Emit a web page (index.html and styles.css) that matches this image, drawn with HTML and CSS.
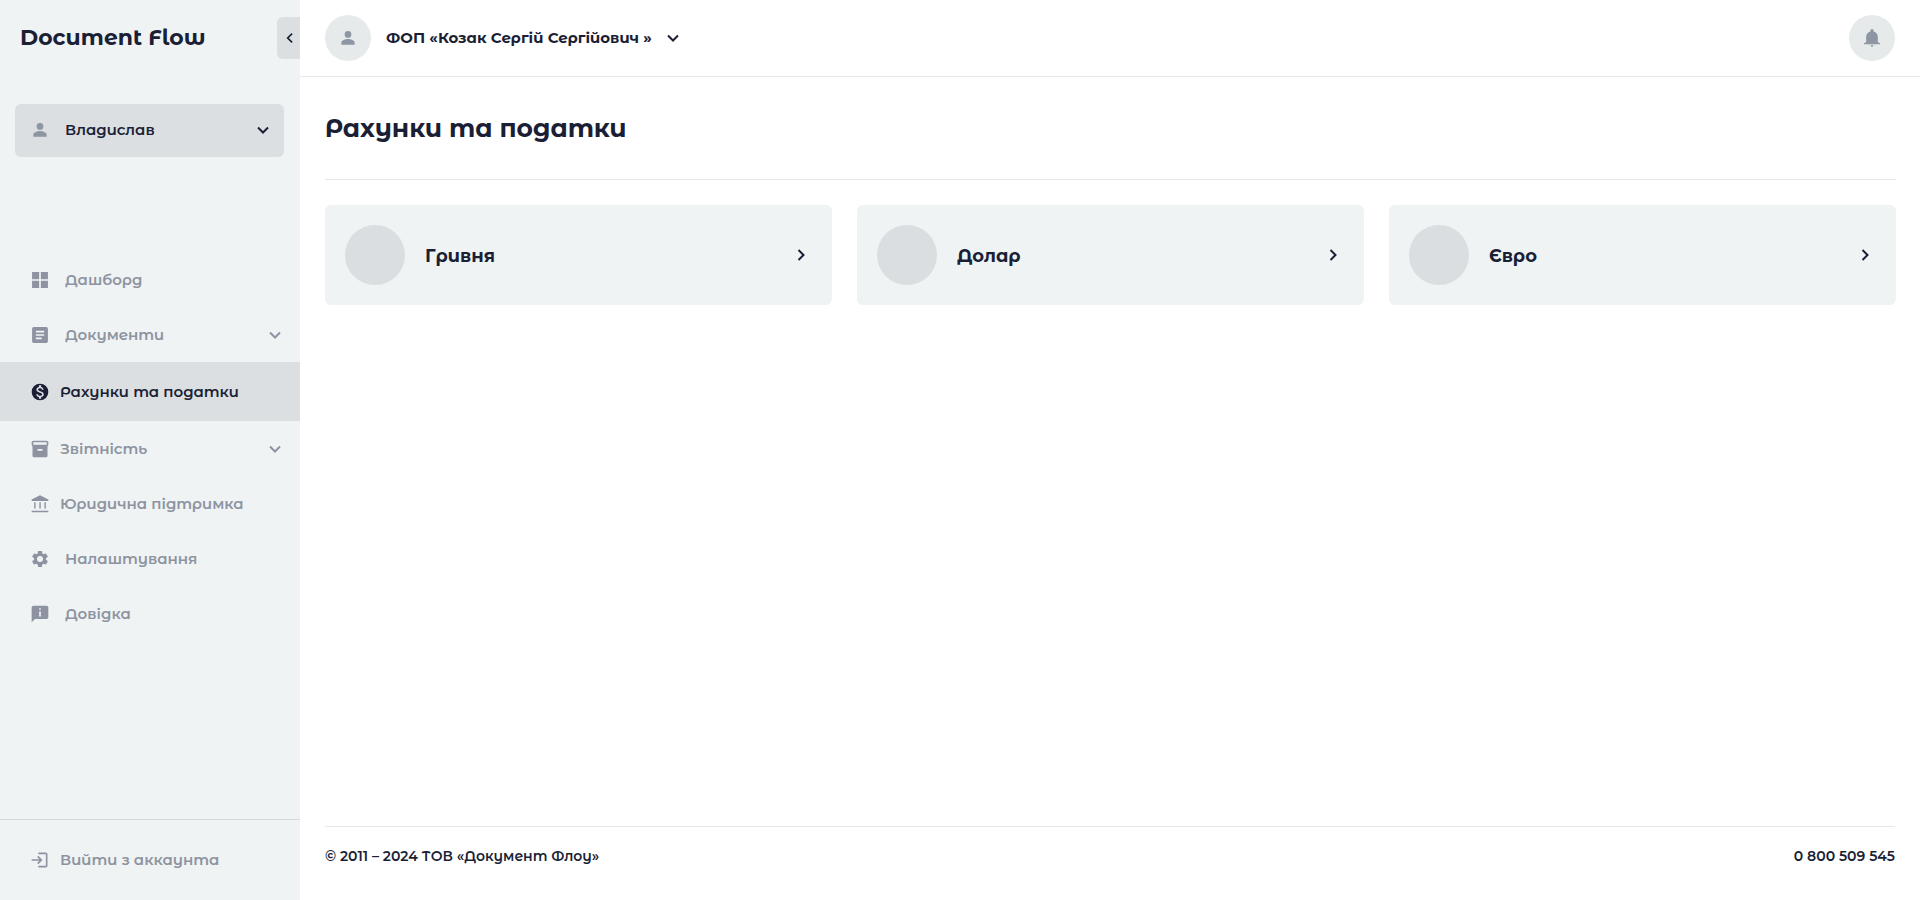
FILE: index.html
```html
<!DOCTYPE html>
<html lang="uk">
<head>
<meta charset="utf-8">
<meta name="viewport" content="width=device-width, initial-scale=1">
<title>Document Flow</title>
<link rel="stylesheet" href="styles.css">
</head>
<body>
<div class="app">
  <aside class="sidebar">
    <div class="brand">
      <a class="brand-name" href="#">Document Flow</a>
      <button class="collapse" type="button" aria-label="Згорнути меню">
        <svg width="20" height="20" viewBox="0 0 24 24"><path d="M16.400 7.400 15 6l-6 6 6 6 1.400-1.400-4.600-4.600z"/></svg>
      </button>
    </div>
    <button class="user" type="button">
      <svg class="icon" viewBox="0 0 24 24"><circle cx="12" cy="7.700" r="4"/><path d="M4 20v-2.400c0-2.800 5-4.400 8-4.400s8 1.600 8 4.400V20z"/></svg>
      <span class="user-name">Владислав</span>
      <svg class="chevron" viewBox="0 0 20 20"><path d="m5 7.500 5 5 5-5"/></svg>
    </button>
    <nav class="nav">
      <a class="nav-item spaced" href="#">
        <svg class="icon" viewBox="0 0 24 24"><path d="M2.500 2.500H11V11H2.500zM13 2.500h8.500V11H13zM2.500 13H11v8.500H2.500zM13 13h8.500v8.500H13z"/></svg>
        <span>Дашборд</span>
      </a>
      <a class="nav-item spaced" href="#">
        <svg class="icon" viewBox="0 0 24 24"><path d="M19.500 2.500h-15a2 2 0 0 0-2 2v15a2 2 0 0 0 2 2h15a2 2 0 0 0 2-2v-15a2 2 0 0 0-2-2zM14 17H7v-2h7zm3-4H7v-2h10zm0-4H7V7h10z"/></svg>
        <span>Документи</span>
        <svg class="chevron" viewBox="0 0 20 20"><path d="m5 7.500 5 5 5-5"/></svg>
      </a>
      <a class="nav-item active" href="#" aria-current="page">
        <svg class="icon" viewBox="0 0 24 24"><path d="M12 2a10 10 0 1 0 0 20 10 10 0 0 0 0-20zm1.410 16.090V20h-2.670v-1.930c-1.710-.36-3.160-1.460-3.270-3.400h1.960c.1 1.050.82 1.870 2.650 1.870 1.960 0 2.400-.98 2.400-1.590 0-.83-.44-1.610-2.670-2.140-2.480-.6-4.180-1.620-4.180-3.670 0-1.720 1.390-2.840 3.110-3.210V4h2.670v1.950c1.860.45 2.790 1.860 2.850 3.390H14.300c-.05-1.110-.64-1.870-2.220-1.870-1.500 0-2.400.68-2.400 1.640 0 .84.65 1.390 2.670 1.910s4.180 1.390 4.180 3.910c-.01 1.830-1.380 2.830-3.120 3.160z"/></svg>
        <span>Рахунки та податки</span>
      </a>
      <a class="nav-item" href="#">
        <svg class="icon" viewBox="0 0 24 24"><path fill-rule="evenodd" d="M20 2H4c-1 0-2 .9-2 2v3.010c0 .72.430 1.340 1 1.690V20c0 1.100 1.100 2 2 2h14c.9 0 2-.9 2-2V8.700c.57-.35 1-.97 1-1.690V4c0-1.100-1-2-2-2zm-5 12H9v-2h6zm5-7H4V4h16z"/></svg>
        <span>Звітність</span>
        <svg class="chevron" viewBox="0 0 20 20"><path d="m5 7.500 5 5 5-5"/></svg>
      </a>
      <a class="nav-item" href="#">
        <svg class="icon" viewBox="0 0 24 24"><path d="M5 10h1.700v7.500H5zM11.200 10h1.700v7.500h-1.700zM17.300 10H19v7.500h-1.700zM2 20h20v2H2zM12 1.500 2 6.500V8.300h20V6.500z"/></svg>
        <span>Юридична підтримка</span>
      </a>
      <a class="nav-item spaced" href="#">
        <svg class="icon" viewBox="0 0 24 24"><path d="M19.140 12.940c.04-.3.060-.61.060-.94 0-.32-.02-.64-.07-.94l2.030-1.580a.49.49 0 0 0 .12-.61l-1.920-3.320a.488.488 0 0 0-.59-.22l-2.390.96c-.5-.38-1.030-.7-1.620-.94l-.36-2.540a.484.484 0 0 0-.48-.41h-3.840c-.24 0-.43.17-.47.41l-.36 2.540c-.59.24-1.130.57-1.620.94l-2.390-.96c-.22-.08-.47 0-.59.22L2.740 8.870c-.12.21-.08.47.12.61l2.030 1.580c-.05.3-.09.63-.09.94s.02.64.07.94l-2.030 1.580a.49.49 0 0 0-.12.61l1.920 3.320c.12.22.37.29.59.22l2.390-.96c.5.38 1.030.7 1.620.94l.36 2.540c.05.24.24.41.48.41h3.840c.24 0 .44-.17.47-.41l.36-2.540c.59-.24 1.130-.56 1.620-.94l2.390.96c.22.08.47 0 .59-.22l1.920-3.320c.12-.22.07-.47-.12-.61zM12 15.600a3.600 3.600 0 1 1 0-7.200 3.600 3.600 0 0 1 0 7.200z"/></svg>
        <span>Налаштування</span>
      </a>
      <a class="nav-item spaced" href="#">
        <svg class="icon" viewBox="0 0 24 24"><path d="M20 2H4a2 2 0 0 0-2 2v18l4-4h14a2 2 0 0 0 2-2V4a2 2 0 0 0-2-2zm-7 13h-2V9h2zm0-8h-2V5h2z"/></svg>
        <span>Довідка</span>
      </a>
    </nav>
    <div class="logout">
      <a class="nav-item" href="#">
        <svg class="icon" viewBox="0 0 24 24"><path d="M10 3h9a2 2 0 0 1 2 2v14a2 2 0 0 1-2 2h-9v-2h9V5h-9zM10 7l5 5-5 5-1.400-1.400 2.600-2.600H2v-2h9.200L8.600 8.400z"/></svg>
        <span>Вийти з аккаунта</span>
      </a>
    </div>
  </aside>
  <div class="page">
    <header class="topbar">
      <button class="company" type="button">
        <span class="round"><svg class="icon" viewBox="0 0 24 24"><circle cx="12" cy="7.700" r="4"/><path d="M4 20v-2.400c0-2.800 5-4.400 8-4.400s8 1.600 8 4.400V20z"/></svg></span>
        <span>ФОП «Козак Сергій Сергійович »</span>
        <svg class="chevron" viewBox="0 0 20 20"><path d="m5 7.500 5 5 5-5"/></svg>
      </button>
      <button class="round" type="button" aria-label="Сповіщення">
        <svg class="bell" viewBox="0 0 24 24"><path d="M12 22.500c1.100 0 2-.7 2-1.700h-4c0 1 .9 1.700 2 1.700zM19 17v-6.500c0-3.200-2-5.700-5-6.400V3.200a2 2 0 0 0-4 0v.9c-3 .7-5 3.200-5 6.400V17l-2.500 1v1.500h19V18z"/></svg>
      </button>
    </header>
    <main class="content">
      <h1 class="title">Рахунки та податки</h1>
      <div class="cards">
        <a class="card" href="#"><span class="coin"></span><span class="card-name">Гривня</span><svg class="arrow" viewBox="0 0 20 20"><path d="m7.500 5 5 5-5 5"/></svg></a>
        <a class="card" href="#"><span class="coin"></span><span class="card-name">Долар</span><svg class="arrow" viewBox="0 0 20 20"><path d="m7.500 5 5 5-5 5"/></svg></a>
        <a class="card" href="#"><span class="coin"></span><span class="card-name">Євро</span><svg class="arrow" viewBox="0 0 20 20"><path d="m7.500 5 5 5-5 5"/></svg></a>
      </div>
    </main>
    <footer class="footer">
      <span>© 2011 – 2024 ТОВ «Документ Флоу»</span>
      <a href="tel:0800509545">0 800 509 545</a>
    </footer>
  </div>
</div>
</body>
</html>
```
FILE: styles.css
```css
* { box-sizing: border-box; }
body {
  margin: 0;
  background: #fff;
  color: #1b1f36;
  font-family: "Montserrat Alternates", Montserrat, Inter, "Open Sans", sans-serif;
  font-size: 15px;
  font-weight: 600;
  line-height: 20px;
}
a { color: inherit; text-decoration: none; }
button {
  padding: 0;
  border: 0;
  background: none;
  color: inherit;
  font: inherit;
  cursor: pointer;
}
svg { display: block; flex: none; fill: currentColor; }
.icon { width: 20px; height: 20px; }
.chevron, .arrow {
  width: 20px;
  height: 20px;
  fill: none;
  stroke: currentColor;
  stroke-width: 2;
}
.app { display: flex; min-height: 100vh; }

.sidebar {
  display: flex;
  flex-direction: column;
  flex: none;
  width: 300px;
  background: #eff3f4;
}
.brand {
  display: flex;
  align-items: center;
  justify-content: space-between;
  height: 76px;
  padding-left: 20px;
}
.brand-name { font-size: 22px; font-weight: 700; line-height: 32px; }
.collapse {
  display: flex;
  align-items: center;
  justify-content: center;
  width: 23px;
  height: 42px;
  border-radius: 6px 0 0 6px;
  background: #dbdfe2;
}
.user {
  display: flex;
  align-items: center;
  gap: 15px;
  height: 53px;
  margin: 28px 16px 0 15px;
  padding: 0 11px 1px 15px;
  border-radius: 6px;
  background: #dbdfe2;
}
.user .icon, .round svg { color: #8e96a4; }
.user-name { flex: 1; text-align: left; }
.nav { margin-top: 95px; }
.nav-item {
  display: flex;
  align-items: center;
  gap: 10px;
  height: 55px;
  padding: 0 15px 0 30px;
  color: #8e93a1;
}
.nav-item.spaced { gap: 15px; }
.nav-item.active { height: 59px; background: #dbdfe2; color: #1b1f36; }
.nav-item .chevron { margin-left: auto; }
.logout {
  margin-top: auto;
  padding: 12px 0 13px;
  border-top: 1px solid #d5d9dc;
}

.page { display: flex; flex-direction: column; flex: 1; min-width: 0; }
.topbar {
  display: flex;
  align-items: center;
  justify-content: space-between;
  height: 77px;
  padding: 0 25px;
  border-bottom: 1px solid #e6e8ea;
}
.company { display: flex; align-items: center; gap: 15px; font-weight: 700; }
.company .chevron { margin-left: -4px; }
.round {
  display: flex;
  align-items: center;
  justify-content: center;
  width: 46px;
  height: 46px;
  border-radius: 50%;
  background: #e6eaeb;
}
.bell { width: 20px; height: 20px; }
.content { flex: 1; padding: 0 24px 0 25px; }
.title {
  margin: 0 0 25px;
  padding: 34px 0;
  border-bottom: 1px solid #e6e8ea;
  font-size: 25px;
  font-weight: 700;
  line-height: 34px;
}
.cards { display: grid; grid-template-columns: repeat(3, 1fr); gap: 25px; }
.card {
  display: flex;
  align-items: center;
  gap: 20px;
  padding: 20px 21px 20px 20px;
  border-radius: 6px;
  background: #eff3f4;
}
.coin { width: 60px; height: 60px; border-radius: 50%; background: #dadee0; }
.card-name { flex: 1; padding-top: 2px; font-size: 18px; font-weight: 700; line-height: 24px; }
.footer {
  display: flex;
  justify-content: space-between;
  margin: 0 25px;
  padding: 19px 0 34px;
  border-top: 1px solid #e6e8ea;
  font-size: 14px;
}
```
